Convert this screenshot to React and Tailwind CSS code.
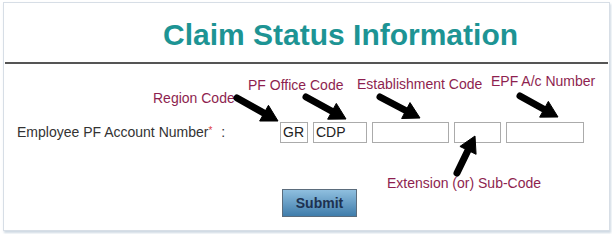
const arrows = [
  // tail -> tip, in page px
  [237, 98, 278, 121],
  [306, 97, 346, 119],
  [380, 97, 420, 118],
  [520, 96, 558, 117],
  [457, 173, 475, 136],
];

function arrowParts([x1, y1, x2, y2]) {
  const dx = x2 - x1;
  const dy = y2 - y1;
  const len = Math.hypot(dx, dy);
  const ux = dx / len;
  const uy = dy / len;
  const headLen = 16;
  const half = 9;
  const bx = x2 - ux * headLen;
  const by = y2 - uy * headLen;
  const px = -uy * half;
  const py = ux * half;
  return {
    shaft: `M${x1} ${y1} L${bx + ux * 2} ${by + uy * 2}`,
    head: `M${x2} ${y2} L${bx + px} ${by + py} L${bx - px} ${by - py} Z`,
  };
}

function Note({ className, children }) {
  return (
    <span className={`absolute whitespace-nowrap text-[14px] leading-none text-[#8e1f4f] ${className}`}>
      {children}
    </span>
  );
}

export default function App() {
  return (
    <div className="relative h-[234px] w-[612px] bg-white pl-[3px] pt-[2px] font-['Liberation_Sans',Arial,sans-serif]">
      <div className="h-[229px] w-[607px] border border-[#d7dee6] bg-white shadow-[1px_2px_2px_rgba(160,180,200,0.5)]">
        <div className="flex h-[59px] items-center pl-[159px] pt-[4px]">
          <h1 className="text-[30px] font-bold leading-none text-[#1d9494]">
            Claim Status Information
          </h1>
        </div>
        <div className="mx-px h-[2px] bg-[#555]" />

        <div className="mt-[58px] flex items-center pl-[13px]">
          <div className="w-[263px] text-[14px] text-[#333]">
            Employee PF Account Number
            <span className="relative -top-[3px] text-[10px] text-[#e04040]">*</span>
            <span className="ml-[9px]">:</span>
          </div>
          <div className="flex gap-[5px]">
            <input
              readOnly
              value="GR"
              className="h-[21px] w-[28px] border border-[#ababab] px-[2px] text-[14px] text-[#222] outline-none"
            />
            <input
              readOnly
              value="CDP"
              className="h-[21px] w-[54px] border border-[#ababab] px-[2px] text-[14px] text-[#222] outline-none"
            />
            <input readOnly className="h-[21px] w-[77px] border border-[#ababab] outline-none" />
            <input readOnly className="h-[21px] w-[47px] border border-[#ababab] outline-none" />
            <input readOnly className="h-[21px] w-[78px] border border-[#ababab] outline-none" />
          </div>
        </div>

        <div className="mt-[46px] pl-[278px]">
          <button className="h-[28px] w-[75px] border border-[#5b6c7c] bg-linear-to-b from-[#8fbfdf] to-[#3f7dab] text-[14px] font-bold text-[#1d3150]">
            Submit
          </button>
        </div>
      </div>

      <Note className="left-[153px] top-[91px]">Region Code</Note>
      <Note className="left-[248px] top-[78px]">PF Office Code</Note>
      <Note className="left-[357px] top-[77px]">Establishment Code</Note>
      <Note className="left-[491px] top-[74px]">EPF A/c Number</Note>
      <Note className="left-[387px] top-[176px]">Extension (or) Sub-Code</Note>

      <svg className="pointer-events-none absolute left-0 top-0" width="612" height="234">
        {arrows.map((a, i) => {
          const p = arrowParts(a);
          return (
            <g key={i} fill="#000" stroke="#000">
              <path d={p.shaft} strokeWidth="7" strokeLinecap="round" fill="none" />
              <path d={p.head} strokeWidth="1" strokeLinejoin="round" />
            </g>
          );
        })}
      </svg>
    </div>
  );
}
